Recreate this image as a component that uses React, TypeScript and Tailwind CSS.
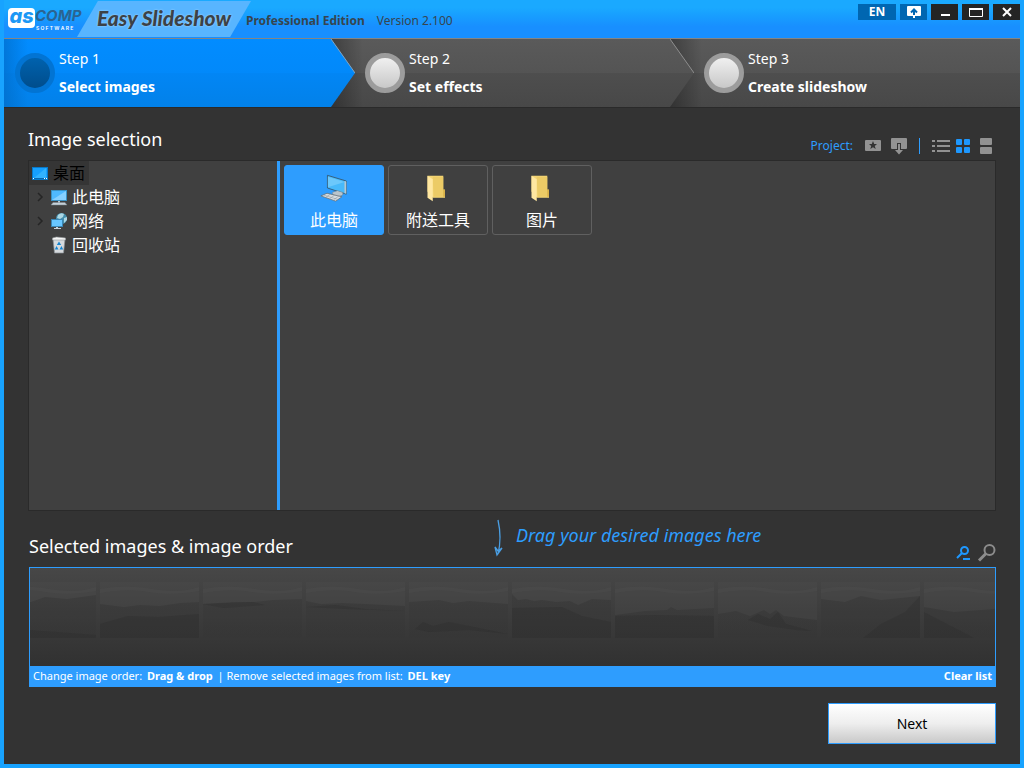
import React from "react";

const tiles = [
	{ name: "此电脑", type: "pc" },
	{ name: "附送工具", type: "folder" },
	{ name: "图片", type: "folder" },
];

// land line and darker foreground of every frame on the film strip
const frames = [
	{ land: "M0 24L34 20 48 15 70 17 99 13V56H0Z", dark: "M0 44L30 48 60 50 99 53V56H0Z" },
	{ land: "M0 22L24 25 40 23 60 24 80 21 99 20V56H0Z", dark: "M0 42L28 34 58 35 99 32V56H0Z" },
	{ land: "M0 22L30 20 50 20 70 18 99 17V56H0Z", dark: "M0 22L50 20 62 23 20 26Z" },
	{ land: "M0 19L15 22 36 21 60 22 99 24V56H0Z", dark: "M0 25L30 23 60 27 99 29 40 27Z" },
	{ land: "M0 20L30 18 44 21 60 19 99 22V56H0Z", dark: "M6 47L14 40 24 44 40 40 60 44 99 52 60 48 20 50Z" },
	{ land: "M0 12L6 18 14 17 22 19 30 18 44 20 58 19 66 23 80 17 99 18V56H0Z", dark: "M0 26L50 25 70 34 99 40V56H0Z" },
	{ land: "M0 33L30 29 52 28 56 25 62 28 99 26V56H0Z", dark: "M0 34L40 33 99 34V56H0Z" },
	{ land: "M0 32L18 29 32 34 46 28 52 32 58 28 66 34 99 38V56H0Z", dark: "M30 38L40 32 52 37 60 30 68 42 94 49 78 48 50 44Z" },
	{ land: "M0 17L24 20 40 14 60 18 99 14V56H0Z", dark: "M42 56L60 42 84 30 99 14V56Z" },
	{ land: "M0 25L30 30 70 27 99 15V56H0Z", dark: "M0 30L50 56H0Z" },
];

function Monitor() {
	return (
		<svg width="18" height="18" viewBox="0 0 18 18" aria-hidden="true">
			<rect x="1.5" y="2.5" width="15" height="10" fill="#4fb9ff" stroke="#3a91c4" />
			<path d="M2 12L16 3V12Z" fill="#86d0ff" />
			<path d="M8 13h2v2H8z" fill="#b9c7d0" />
			<path d="M3 14.5h12l2 2.500H1z" fill="#c5d0d8" stroke="#77858f" strokeWidth=".5" />
		</svg>
	);
}

function Desktop() {
	return (
		<svg width="18" height="18" viewBox="0 0 18 18" aria-hidden="true">
			<rect x="1.5" y="3.5" width="15" height="12" fill="#16a0ff" stroke="#0879c9" />
			<path d="M3 14L15 4v10z" fill="#31b2ff" />
			<path d="M2 14h14v1H2z" fill="#0867b0" />
			<path d="M2 14h1v1H2zM13 14h1v1h-1zM15 14h1v1h-1z" fill="#fff" />
		</svg>
	);
}

function Network() {
	return (
		<svg width="18" height="18" viewBox="0 0 18 18" aria-hidden="true">
			<circle cx="11.5" cy="6.5" r="5.5" fill="#448eac" />
			<path d="M8 3q3-3 6-1l-1 3-3 2-3-1zM14 6l3-1v3l-3 3z" fill="#acd7e4" />
			<rect x="1.5" y="7.5" width="11" height="7" fill="#68c6ff" stroke="#3a86b5" />
			<path d="M6 15h2v1h3v1H4v-1h2z" fill="#c5d0d8" />
		</svg>
	);
}

function RecycleBin() {
	return (
		<svg width="18" height="18" viewBox="0 0 18 18" aria-hidden="true">
			<path d="M3 3h12l-1.5 14h-9z" fill="#d6dadd" stroke="#8a9096" strokeWidth=".7" />
			<path d="M2.5 2l4-1 5 .5 4 .5v2h-13z" fill="#f5f5f5" stroke="#92979b" strokeWidth=".6" />
			<path d="M9 5.500l2.200 3.500H6.800zM4.800 13.500L6.500 10l2 3.500zM13.200 13.500L11.500 10l-2 3.500z" fill="#1686d2" />
		</svg>
	);
}

function Folder() {
	return (
		<svg width="32" height="32" viewBox="0 0 32 32" aria-hidden="true">
			<path d="M4 2h18v16h2v9H10L4 20z" fill="#f4d574" />
			<path d="M10 3h12v15h2v8H11z" fill="#eccb66" />
			<path d="M4 2l6 4v25l-6-4z" fill="#ffe7a1" />
			<path d="M22 18h2v8h-2z" fill="#d9b24a" />
		</svg>
	);
}

function Computer() {
	return (
		<svg width="32" height="32" viewBox="0 0 32 32" aria-hidden="true">
			<path d="M8.500 1.500L30 8v15L8.500 16z" fill="#48b9fa" stroke="#35566b" />
			<path d="M9 3l19 6-19 6z" fill="#6cc8fb" />
			<path d="M28 8l2 .5v14l-2-.5z" fill="#b5c7d2" />
			<path d="M14 21l6-2 6 2v3l-5 2-6-2z" fill="#bac5cc" stroke="#6f7c85" strokeWidth=".5" />
			<path d="M1 25l7-3 17 4-7 5z" fill="#d7dde1" stroke="#5b6770" strokeWidth=".8" />
			<path d="M4 24l16 5M6 27l6-4M11 28l6-4M16 29l6-4" stroke="#8b969e" strokeWidth=".6" />
		</svg>
	);
}

function Logo() {
	return (
		<div className="flex w-[77px] shrink-0">
			<span className="flex h-5 w-[27px] items-center justify-center rounded-[4px] bg-white pb-1 font-['Inter'] text-[20px] font-extrabold italic leading-none text-[#1c98f5]">
				as
			</span>
			<span className="flex flex-col whitespace-nowrap font-['Inter']">
				<span className="text-[15px] font-bold italic leading-4 text-[#2b6491]">COMP</span>
				<span className="pl-px pt-0.5 text-[5px] font-semibold leading-none text-white">S O F T W A R E</span>
			</span>
		</div>
	);
}

function Header() {
	return (
		<header className="flex h-[38px] justify-between bg-linear-to-b from-[#1aa9ff] from-20% to-[#188fff] to-70% pl-1">
			<div className="flex items-center">
				<Logo />
				<div className="-ml-2 flex h-9 w-[174px] items-center justify-center bg-[#58b5ff] pb-0.5 font-['Lato'] text-[21px] font-black italic text-[#3b4247] [clip-path:polygon(12%_0,100%_0,88%_100%,0_100%)] [text-shadow:0_0_2px_#b9dfff]">
					Easy Slideshow
				</div>
				<p className="-ml-[5px] whitespace-nowrap pt-[3px] text-[12px] text-[#36454f]">
					<span className="mr-3 font-bold">Professional Edition</span>
					Version 2.100
				</p>
			</div>
			<div className="flex gap-1 pt-1">
				<button className="h-4 w-[38px] bg-[#0066b1] text-[12px] font-bold leading-4 text-white">EN</button>
				<button aria-label="Update" className="flex h-4 w-[27px] items-center justify-center bg-[#0066b1]">
					<svg width="14" height="14" viewBox="0 0 14 14">
						<rect y="1" width="14" height="10" rx="1" fill="#fff" />
						<path d="M7 10V5M4 7.500l3-3 3 3" fill="none" stroke="#0066b1" strokeWidth="2" />
						<path d="M6 11h2v2H6z" fill="#fff" />
					</svg>
				</button>
				<button aria-label="Minimize" className="flex h-4 w-[27px] items-center justify-center bg-[#242424]">
					<svg width="14" height="14" viewBox="0 0 14 14"><path d="M3 9h9v2H3z" fill="#fff" /></svg>
				</button>
				<button aria-label="Maximize" className="flex h-4 w-[27px] items-center justify-center bg-[#242424]">
					<svg width="14" height="14" viewBox="0 0 14 14">
						<path d="M.5 3.500h13v8H.5z" fill="none" stroke="#fff" />
						<path d="M0 3h14v2H0z" fill="#fff" />
					</svg>
				</button>
				<button aria-label="Close" className="flex h-4 w-[27px] items-center justify-center bg-[#242424]">
					<svg width="14" height="14" viewBox="0 0 14 14"><path d="M3 3l8 8M11 3l-8 8" stroke="#fff" strokeWidth="2" /></svg>
				</button>
			</div>
		</header>
	);
}

function Chevron({ active }: { active?: boolean }) {
	return (
		<svg className="absolute -right-6 top-0 z-10" width="24" height="68" viewBox="0 0 24 68" aria-hidden="true">
			<defs>
				<linearGradient id={active ? "tipOn" : "tipOff"} x1="0" y1="0" x2="0" y2="1">
					<stop offset="0" stopColor={active ? "#028cff" : "#5a5a5a"} />
					<stop offset=".5" stopColor={active ? "#0289fa" : "#545454"} />
					<stop offset=".5" stopColor={active ? "#0286f5" : "#4e4e4e"} />
					<stop offset="1" stopColor={active ? "#0281e9" : "#484848"} />
				</linearGradient>
			</defs>
			<path d="M0 0L24 34 0 68z" fill={active ? "url(#tipOn)" : "url(#tipOff)"} />
			<path d="M0 0L24 34" stroke={active ? "#7da6c8" : "#8e8e8e"} />
		</svg>
	);
}

function Step({ no, label, active }: { no: number; label: string; active?: boolean }) {
	return (
		<button
			className={
				"relative flex h-[68px] gap-1 text-left text-white " +
				(active
					? "bg-[linear-gradient(#028cff,#0289fa_50%,#0286f5_50%,#0281e9)] pl-[11px]"
					: "bg-[linear-gradient(#5a5a5a,#545454_50%,#4e4e4e_50%,#484848)] pl-[34px]")
			}
		>
			{active ? (
				<span className="absolute inset-y-0 left-0 w-6 bg-linear-to-r from-[#0069c2]/60 to-transparent" />
			) : (
				<span className="absolute inset-y-0 left-0 w-8 bg-linear-to-r from-black/30 to-transparent" />
			)}
			<span
				className={
					"relative mt-[14px] size-10 shrink-0 rounded-full border-[5px] " +
					(active ? "border-[#0274d3] bg-linear-to-b from-[#0062ae] to-[#004d8c]" : "border-[#9c9c9c] bg-linear-to-b from-[#f0f0f0] to-[#c8c8c8]")
				}
			/>
			<span className="relative whitespace-nowrap pt-1.5 text-[14px] leading-7">
				Step {no}
				<br />
				<b>{label}</b>
			</span>
			{no < 3 && <Chevron active={active} />}
		</button>
	);
}

function Toolbar() {
	return (
		<div className="flex items-center text-[#929292]">
			<span className="mr-3 text-[12px] leading-4 text-[#2e9dfe]">Project:</span>
			<button aria-label="Load project" className="mr-2.5">
				<svg width="16" height="16" viewBox="0 0 16 16">
					<rect y="2" width="16" height="11" rx="1" fill="currentColor" />
					<path d="M8 3l1.200 3H12L9.800 8l.9 3L8 9.200 5.300 11l.9-3L4 6h2.800z" fill="#333" />
				</svg>
			</button>
			<button aria-label="Save project" className="mr-3">
				<svg width="16" height="18" viewBox="0 0 16 18">
					<rect y="1" width="16" height="11" rx="1" fill="currentColor" />
					<path d="M6 6h4v6H6z" fill="#333" />
					<path d="M7 7h2v6h3l-4 4.500L4 13h3z" fill="currentColor" />
				</svg>
			</button>
			<span className="mr-3 h-4 w-px bg-[#2e9dfe]" />
			<button aria-label="List view" className="mr-1.5">
				<svg width="18" height="16" viewBox="0 0 18 16">
					<path d="M0 2h3v2H0zM5 2h13v2H5zM0 7h3v2H0zM5 7h13v2H5zM0 12h3v2H0zM5 12h13v2H5z" fill="currentColor" />
				</svg>
			</button>
			<button aria-label="Tile view" className="mr-2.5 text-[#1e98ff]">
				<svg width="14" height="14" viewBox="0 0 14 14" fill="currentColor">
					<rect width="6" height="6" rx="1" />
					<rect x="8" width="6" height="6" rx="1" />
					<rect y="8" width="6" height="6" rx="1" />
					<rect x="8" y="8" width="6" height="6" rx="1" />
				</svg>
			</button>
			<button aria-label="Large view" className="mr-1">
				<svg width="12" height="16" viewBox="0 0 12 16" fill="currentColor">
					<rect width="12" height="7" rx="1" />
					<rect y="9" width="12" height="7" rx="1" />
				</svg>
			</button>
		</div>
	);
}

function Tree() {
	const items = [
		{ name: "此电脑", icon: <Monitor />, open: true },
		{ name: "网络", icon: <Network />, open: true },
		{ name: "回收站", icon: <RecycleBin />, open: false },
	];
	return (
		<nav className="w-[248px] shrink-0 text-[16px] leading-6 text-white">
			<button className="flex h-6 items-center gap-1 bg-[#353535] px-0.5 pr-1 text-black">
				<Desktop />
				桌面
			</button>
			{items.map((item) => (
				<button key={item.name} className="flex h-6 items-center gap-1 pl-1.5">
					<svg width="11" height="12" viewBox="0 0 11 12" aria-hidden="true">
						{item.open && <path d="M3 2l4 4-4 4" fill="none" stroke="#252525" strokeWidth="1.5" />}
					</svg>
					{item.icon}
					{item.name}
				</button>
			))}
		</nav>
	);
}

function FilmStrip() {
	return (
		<div className="flex h-[98px] gap-1 overflow-hidden bg-linear-to-b from-[#474747] to-[#313131] pt-[14px]">
			{frames.map((frame, i) => (
				<svg
					key={i}
					className={i === 0 ? "-ml-[33px] shrink-0" : "shrink-0"}
					width="99"
					height="56"
					viewBox="0 0 99 56"
					aria-hidden="true"
				>
					<defs>
						<linearGradient id={"land" + i} x1="0" y1="0" x2="0" y2="1">
							<stop offset="0" stopColor="#303030" stopOpacity=".35" />
							<stop offset="1" stopColor="#303030" stopOpacity=".5" />
						</linearGradient>
					</defs>
					<path d="M0 0h99v56H0z" fill="#555" opacity=".2" />
					<path d="M0 7q25-5 52 0t47-2v4q-30 5-50 1t-49 1z" fill="#666" opacity=".12" />
					<path d={frame.land} fill={"url(#land" + i + ")"} />
					<path d={frame.dark} fill="#272727" opacity=".25" />
				</svg>
			))}
		</div>
	);
}

function App() {
	return (
		<div className="flex min-h-screen flex-col bg-[#18a3ff] px-1 pb-1 font-['Noto_Sans','Noto_Sans_CJK_SC',sans-serif]">
			<Header />
			<div className="flex flex-1 flex-col bg-[#333]">
				<div className="grid grid-cols-[327fr_339fr_350fr] border-b border-t border-b-[#2a2a2a] border-t-[#858585]">
					<Step no={1} label="Select images" active />
					<Step no={2} label="Set effects" />
					<Step no={3} label="Create slideshow" />
				</div>

				<main className="flex flex-1 flex-col px-6 pb-5">
					<div className="flex h-[52px] items-end justify-between pb-[5px]">
						<h1 className="pb-0.5 text-[18px] leading-7 text-white">Image selection</h1>
						<Toolbar />
					</div>
					<div className="flex flex-1 border border-[#2a2a2a] bg-[#404040]">
						<Tree />
						<div className="w-[3px] bg-[#2e9dfe]" />
						<div className="flex flex-1 items-start gap-1 p-1">
							{tiles.map((tile) => (
								<button
									key={tile.name}
									className={
										"flex h-[70px] w-[100px] flex-col items-center gap-1 rounded-[3px] border pt-2 text-[16px] text-white " +
										(tile.type === "pc" ? "border-[#2e9dfe] bg-[#2e9dfe]" : "border-[#606060]")
									}
								>
									{tile.type === "pc" ? <Computer /> : <Folder />}
									<span className="leading-7">{tile.name}</span>
								</button>
							))}
						</div>
					</div>

					<div className="flex h-14 items-end pb-[5px] pl-px">
						<h2 className="w-[465px] pb-0.5 text-[18px] leading-7 text-white">Selected images &amp; image order</h2>
						<div className="flex flex-1 gap-3 self-start pt-2 text-[#2e9dfe]">
							<svg width="10" height="38" viewBox="0 0 10 38" aria-hidden="true">
								<path d="M4 1q4 18 0 34M1 28l2 8 5-7-4 3z" fill="none" stroke="#4a9fe4" strokeWidth="1.3" />
							</svg>
							<p className="text-[18px] italic leading-8">Drag your desired images here</p>
						</div>
						<button aria-label="Smaller thumbnails" className="mr-1.5 text-[#1e98ff]">
							<svg width="16" height="16" viewBox="0 0 16 16" fill="none" stroke="currentColor" strokeWidth="2">
								<circle cx="9.5" cy="4.5" r="3.5" />
								<path d="M7 7l-5 5M8 13h7" />
							</svg>
						</button>
						<button aria-label="Larger thumbnails" className="text-[#8c8c8c]">
							<svg width="19" height="18" viewBox="0 0 19 18" fill="none" stroke="currentColor" strokeWidth="2">
								<circle cx="12.5" cy="6" r="5" />
								<path d="M9 9.500l-7 7" strokeWidth="3" />
							</svg>
						</button>
					</div>
					<div className="ml-px border border-[#2e9dfe]">
						<FilmStrip />
						<div className="flex h-5 items-center justify-between bg-[#2e9dfe] px-[3px] text-[11px] leading-4 text-white">
							<p>
								Change image order: <b className="mx-0.5">Drag &amp; drop</b> | Remove selected images from list: <b className="mx-0.5">DEL key</b>
							</p>
							<button className="font-bold">Clear list</button>
						</div>
					</div>
					<button className="mt-4 h-[41px] w-[168px] self-end border border-[#2e9dfe] bg-linear-to-b from-white via-[#eee] to-[#c9c9c9] text-[14px] text-black">
						Next
					</button>
				</main>
			</div>
		</div>
	);
}

export default App;
